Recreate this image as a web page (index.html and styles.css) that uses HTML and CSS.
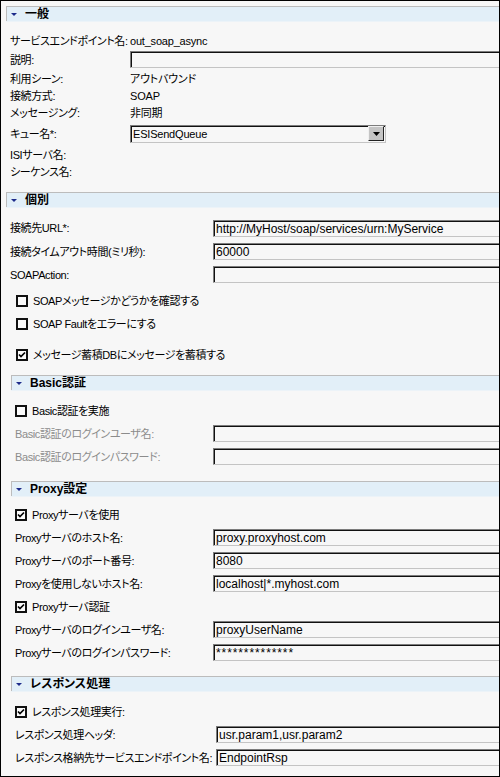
FILE: index.html
```html
<!DOCTYPE html>
<html lang="ja">
<head>
<meta charset="utf-8">
<title>out_soap_async</title>
<link rel="stylesheet" href="styles.css">
</head>
<body>
<div class="frame">
  <section class="sec top">
    <div class="hdr"><svg class="arr" width="6" height="3" viewBox="0 0 6 3"><path d="M0 0H6L3 3Z"/></svg><span>一般</span></div>
    <div class="body gen">
      <div class="row h17"><span class="lbl w120">サービスエンドポイント名:</span><span class="val">out_soap_async</span></div>
      <div class="row h21"><span class="lbl w120">説明:</span><span class="inp"></span></div>
      <div class="row h17"><span class="lbl w120">利用シーン:</span><span class="val">アウトバウンド</span></div>
      <div class="row h17"><span class="lbl w120">接続方式:</span><span class="val">SOAP</span></div>
      <div class="row h17"><span class="lbl w120">メッセージング:</span><span class="val">非同期</span></div>
      <div class="row h25"><span class="lbl w120">キュー名*:</span><span class="sel"><span class="seltext">ESISendQueue</span><span class="btn"><svg width="7" height="4" viewBox="0 0 7 4"><path d="M0 0H7L3.5 4Z"/></svg></span></span></div>
      <div class="row h17"><span class="lbl w120">ISIサーバ名:</span></div>
      <div class="row h17"><span class="lbl w120">シーケンス名:</span></div>
    </div>
  </section>

  <section class="sec top indiv">
    <div class="hdr"><svg class="arr" width="6" height="3" viewBox="0 0 6 3"><path d="M0 0H6L3 3Z"/></svg><span>個別</span></div>
    <div class="body ind">
      <div class="row h24"><span class="lbl w203">接続先URL*:</span><span class="inp">http://MyHost/soap/services/urn:MyService</span></div>
      <div class="row h23"><span class="lbl w203">接続タイムアウト時間(ミリ秒):</span><span class="inp">60000</span></div>
      <div class="row h23"><span class="lbl w203">SOAPAction:</span><span class="inp"></span></div>
      <div class="chks">
        <div class="row h23 cb-in"><span class="cb"></span><span>SOAPメッセージかどうかを確認する</span></div>
        <div class="row h23 cb-in"><span class="cb"></span><span>SOAP Faultをエラーにする</span></div>
        <div class="row h23 cb-in gap8"><span class="cb on"><svg width="8" height="8" viewBox="0 0 8 8"><path d="M1 3.5L3 5.5L7 1.5" /></svg></span><span>メッセージ蓄積DBにメッセージを蓄積する</span></div>
      </div>

      <section class="sec sub basic">
        <div class="hdr"><svg class="arr" width="6" height="3" viewBox="0 0 6 3"><path d="M0 0H6L3 3Z"/></svg><span>Basic認証</span></div>
        <div class="body sbody pt9">
          <div class="row h23"><span class="cb"></span><span>Basic認証を実施</span></div>
          <div class="row h23 dis"><span class="lbl w198">Basic認証のログインユーザ名:</span><span class="inp"></span></div>
          <div class="row h23 dis"><span class="lbl w198">Basic認証のログインパスワード:</span><span class="inp"></span></div>
        </div>
      </section>

      <section class="sec sub proxy">
        <div class="hdr"><svg class="arr" width="6" height="3" viewBox="0 0 6 3"><path d="M0 0H6L3 3Z"/></svg><span>Proxy設定</span></div>
        <div class="body sbody pt7">
          <div class="row h23"><span class="cb on"><svg width="8" height="8" viewBox="0 0 8 8"><path d="M1 3.5L3 5.5L7 1.5" /></svg></span><span>Proxyサーバを使用</span></div>
          <div class="row h23"><span class="lbl w198">Proxyサーバのホスト名:</span><span class="inp">proxy.proxyhost.com</span></div>
          <div class="row h23"><span class="lbl w198">Proxyサーバのポート番号:</span><span class="inp">8080</span></div>
          <div class="row h23"><span class="lbl w198">Proxyを使用しないホスト名:</span><span class="inp">localhost|*.myhost.com</span></div>
          <div class="row h23"><span class="cb on"><svg width="8" height="8" viewBox="0 0 8 8"><path d="M1 3.5L3 5.5L7 1.5" /></svg></span><span>Proxyサーバ認証</span></div>
          <div class="row h23"><span class="lbl w198">Proxyサーバのログインユーザ名:</span><span class="inp">proxyUserName</span></div>
          <div class="row h23"><span class="lbl w198">Proxyサーバのログインパスワード:</span><span class="inp pw">**************</span></div>
        </div>
      </section>

      <section class="sec sub resp">
        <div class="hdr"><svg class="arr" width="6" height="3" viewBox="0 0 6 3"><path d="M0 0H6L3 3Z"/></svg><span>レスポンス処理</span></div>
        <div class="body sbody pt10">
          <div class="row h22"><span class="cb on"><svg width="8" height="8" viewBox="0 0 8 8"><path d="M1 3.5L3 5.5L7 1.5" /></svg></span><span>レスポンス処理実行:</span></div>
          <div class="row h23"><span class="lbl w201">レスポンス処理ヘッダ:</span><span class="inp">usr.param1,usr.param2</span></div>
          <div class="row h23"><span class="lbl w201">レスポンス格納先サービスエンドポイント名:</span><span class="inp">EndpointRsp</span></div>
        </div>
      </section>
    </div>
  </section>
</div>
</body>
</html>
```

FILE: styles.css
```css
* { box-sizing: border-box; }
html, body { margin: 0; padding: 0; background: #f7f7f7; }
body {
  font-family: "Liberation Sans", "Noto Sans CJK JP", sans-serif;
  font-size: 11px;
  letter-spacing: -0.4px;
  line-height: 14px;
  color: #000;
  font-feature-settings: "palt";
}
.frame {
  width: 500px;
  height: 777px;
  border: 1px solid #000;
  background: #f7f7f7;
  overflow: hidden;
}
.sec.top { margin-left: 5px; }
.sec.top:first-child { margin-top: 5px; }
.hdr {
  height: 15px;
  border-top: 1px solid #bcbcbc;
  border-left: 1px solid #bcbcbc;
  background: #e2eff8;
  box-shadow: 0 1px 0 #ecf3f8;
  display: flex;
  align-items: center;
  padding-left: 4px;
  font-weight: bold;
  font-size: 12px;
  letter-spacing: 0;
}
.hdr .arr { fill: #1c2a8a; flex-shrink: 0; margin-right: 8px; margin-top: 1px; }
.body { padding-left: 4px; }
.gen { padding-top: 11px; padding-bottom: 12px; }
.ind { padding-top: 9px; }
.sub { margin-left: 1px; }
.sbody { padding-left: 4px; }
.basic { margin-top: 9px; }
.proxy { margin-top: 13px; }
.resp { margin-top: 12px; }
.pt9 { padding-top: 9px; }
.pt7 { padding-top: 7px; }
.pt10 { padding-top: 10px; }

.row { display: flex; align-items: center; white-space: nowrap; }
.h17 { height: 17px; }
.h21 { height: 21px; }
.h22 { height: 22px; }
.h23 { height: 23px; }
.h24 { height: 24px; }
.h25 { height: 25px; }
.lbl { flex-shrink: 0; overflow: visible; }
.w120 { width: 120px; }
.w198 { width: 198px; }
.w201 { width: 201px; }
.w203 { width: 203px; }
.dis { color: #8c8c8c; }
.val { letter-spacing: -0.2px; }

.inp {
  flex: 1;
  height: 17px;
  border-top: 1px solid #7c7c7c;
  border-left: 1px solid #7c7c7c;
  border-bottom: 1px solid #c4c4c4;
  box-shadow: inset 1px 1px 0 #111;
  padding: 1px 0 0 2px;
  line-height: 14px;
  font-size: 12px;
  letter-spacing: 0;
  color: #000;
  background: #f7f7f7;
  overflow: hidden;
}
.pw { letter-spacing: 0.9px; }
.sel {
  width: 256px;
  height: 18px;
  border-top: 1px solid #7c7c7c;
  border-left: 1px solid #7c7c7c;
  border-bottom: 1px solid #c4c4c4;
  border-right: 1px solid #c4c4c4;
  box-shadow: inset 1px 1px 0 #111;
  display: flex;
  align-items: center;
  padding: 1px 1px 0 2px;
}
.seltext { flex: 1; letter-spacing: -0.2px; }
.btn {
  width: 16px;
  height: 15px;
  background: #c4c4c4;
  border-top: 1px solid #f0f0f0;
  border-left: 1px solid #f0f0f0;
  border-right: 1px solid #222;
  border-bottom: 1px solid #222;
  display: flex;
  align-items: center;
  justify-content: center;
  margin-top: -1px;
}
.btn svg { fill: #000; }

.chks { margin-top: 3px; }
.cb-in { padding-left: 6px; }
.gap8 { margin-top: 8px; }
.cb {
  width: 12px;
  height: 12px;
  border: 2px solid #111;
  background: #fbfbfb;
  margin-right: 5px;
  flex-shrink: 0;
  display: flex;
  align-items: center;
  justify-content: center;
}
.cb svg { fill: none; stroke: #000; stroke-width: 1.7; }
```
